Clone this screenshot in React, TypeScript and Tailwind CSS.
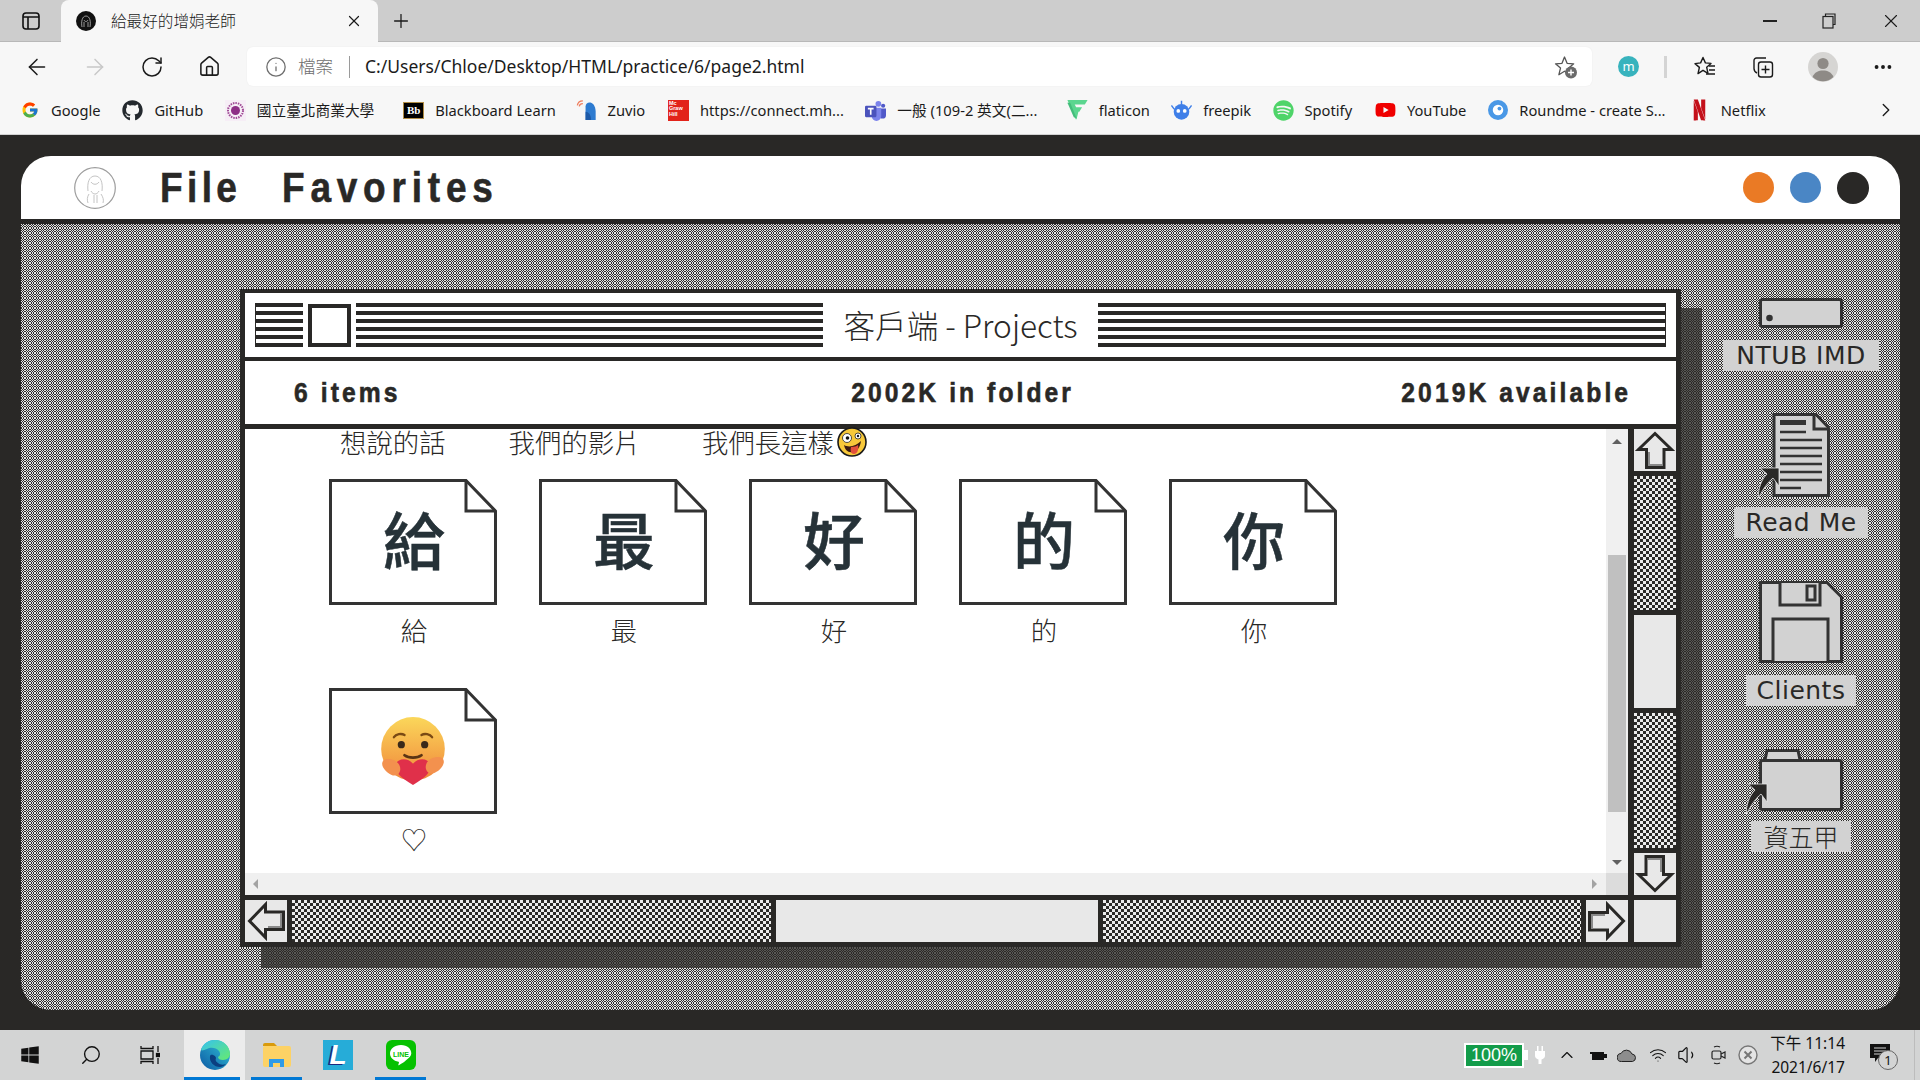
import { ArrowLeft, ArrowRight, ChevronRight, ChevronUp, Home, Info, MoreHorizontal, Plus, RotateCw, Search, Volume1, Wifi, X } from "lucide-react";
import type { ReactNode } from "react";
import { FaGithub, FaSpotify, FaWindows, FaYoutube } from "react-icons/fa";
import { FcGoogle } from "react-icons/fc";
import { SiNetflix } from "react-icons/si";

const checker =
  "bg-[conic-gradient(#2b2a28_25%,#ececec_0_50%,#2b2a28_0_75%,#ececec_0)] bg-[length:6px_6px]";
const headFont =
  "inline-block font-['Liberation_Sans',sans-serif] font-bold text-[#292826] scale-x-[.88] [-webkit-text-stroke:0.6px_#292826]";
const sysFont = "font-['Noto_Sans','Noto_Sans_CJK_TC',sans-serif]";
const cjkLight = "font-['Noto_Sans_CJK_TC','Noto_Sans',sans-serif] font-light";

const bookmarks: { icon: ReactNode; label: string; width: string }[] = [
  { icon: <FcGoogle className="size-[18px]" />, label: "Google", width: "w-[50px]" },
  { icon: <FaGithub className="size-[21px] text-[#24292e]" />, label: "GitHub", width: "w-[49px]" },
  { icon: <NtubIcon />, label: "國立臺北商業大學", width: "w-[125px]" },
  { icon: <BbIcon />, label: "Blackboard Learn", width: "w-[119px]" },
  { icon: <ZuvioIcon />, label: "Zuvio", width: "w-[39px]" },
  { icon: <McGrawIcon />, label: "https://connect.mh...", width: "w-[144px]" },
  { icon: <TeamsIcon />, label: "一般 (109-2 英文(二...", width: "w-[148px]" },
  { icon: <FlaticonIcon />, label: "flaticon", width: "w-[51px]" },
  { icon: <FreepikIcon />, label: "freepik", width: "w-[48px]" },
  { icon: <FaSpotify className="size-[21px] text-[#4fd469]" />, label: "Spotify", width: "w-[49px]" },
  { icon: <FaYoutube className="size-[22px] text-[#f00000]" />, label: "YouTube", width: "w-[59px]" },
  { icon: <RoundmeIcon />, label: "Roundme - create S...", width: "w-[148px]" },
  { icon: <SiNetflix className="size-[22px] text-[#c4101a]" />, label: "Netflix", width: "w-[44px]" },
];

const files = ["給", "最", "好", "的", "你"];

// wallpaper is a 1px checker blown up by 125%, so cells come out 1,1,1,2 px wide
const ditherCells = [
  [0, 1],
  [1, 1],
  [2, 1],
  [3, 2],
];

export default function App() {
  return (
    <div className={`flex h-[1080px] w-[1920px] flex-col overflow-hidden bg-[#292826] ${sysFont}`}>
      <BrowserChrome />
      <main className="flex min-h-0 flex-1 flex-col pl-[21px] pr-[20px] pt-[21px] pb-[20px]">
        <MenuBar />
        <section className="relative mt-[5px] flex flex-1 overflow-hidden rounded-b-[30px] pl-[219px] pt-[65px]">
          <Wallpaper />
          <div className="absolute top-[84px] left-[240px] h-[660px] w-[1441px] bg-[#292826]/75" />
          <FinderWindow />
          <DesktopIcons />
        </section>
      </main>
      <Taskbar />
    </div>
  );
}

function Wallpaper() {
  return (
    <svg aria-hidden className="absolute inset-0 h-full w-full" shapeRendering="crispEdges">
      <defs>
        <pattern id="dither" width="5" height="5" patternUnits="userSpaceOnUse">
          <rect width="5" height="5" fill="#e4e4e4" />
          {ditherCells.flatMap(([col, w], i) =>
            ditherCells.map(([row, h], j) =>
              (i + j) % 2 === 1 ? <rect key={`${i}-${j}`} x={col} y={row} width={w} height={h} fill="#2e2d2b" /> : null,
            ),
          )}
        </pattern>
      </defs>
      <rect width="100%" height="100%" fill="url(#dither)" />
    </svg>
  );
}

function BrowserChrome() {
  return (
    <header className="shrink-0 text-[#1b1b1b]">
      <div className="flex h-[42px] items-stretch border-b border-[#b8b8b8] bg-[#cdcdcd]">
        <div className="flex w-[61px] items-center justify-center">
          <svg viewBox="0 0 18 18" className="size-[18px]" fill="none" stroke="#111" strokeWidth="1.6">
            <rect x="1" y="1" width="16" height="16" rx="3" />
            <path d="M1 5h16M6 5v12" />
          </svg>
        </div>
        <div className="-mb-px flex w-[317px] items-center rounded-t-lg bg-[#f7f7f7] pl-[15px]">
          <TabFavicon />
          <span className={`ml-[15px] text-[15.6px] ${cjkLight}`}>給最好的增娟老師</span>
          <X className="ml-auto mr-[15px] size-[18px]" strokeWidth={1.6} />
        </div>
        <Plus className="ml-[12px] size-[22px] self-center" strokeWidth={1.4} />
        <div className="ml-auto flex items-center">
          <span className="h-[2px] w-[14px] bg-[#222]" />
          <svg viewBox="0 0 14 16" className="ml-[45px] h-[16px] w-[14px]" fill="none" stroke="#222" strokeWidth="1.2">
            <rect x="1" y="3.5" width="10" height="11.5" />
            <path d="M3.5 3.5V1H13v10.5h-2" />
          </svg>
          <X className="ml-[44px] mr-[18px] size-[22px]" strokeWidth={1.2} />
        </div>
      </div>
      <div className="flex h-[46px] items-center bg-[#f7f7f7] pt-[3px]">
        <div className="flex w-[247px] items-center">
          <ArrowLeft className="ml-[24px] size-[26px]" strokeWidth={1.4} />
          <ArrowRight className="ml-[32px] size-[26px] text-[#c8c8c8]" strokeWidth={1.4} />
          <RotateCw className="ml-[32px] size-[24px]" strokeWidth={1.5} />
          <Home className="ml-[34px] size-[23px]" strokeWidth={1.6} />
        </div>
        <div className="flex h-[39px] w-[1345px] items-center rounded-md bg-white pl-[18px] shadow-[0_0_2px_#0000000f]">
          <Info className="size-[22px] text-[#6e6e6e]" strokeWidth={1.4} />
          <span className={`ml-[11px] text-[17.5px] text-[#6e6e6e] ${cjkLight}`}>檔案</span>
          <span className="ml-[16px] h-[22px] w-px bg-[#9a9a9a]" />
          <span className="ml-[15px] text-[17.5px] leading-none text-[#1b1b1b]">C:/Users/Chloe/Desktop/HTML/practice/6/page2.html</span>
          <StarPlus />
        </div>
        <span className="ml-[26px] flex size-[21px] items-center justify-center rounded-full bg-[#38b3bd] text-[13px] leading-none text-white">m</span>
        <span className="ml-[25px] h-[22px] w-[3px] bg-[#d4d4d4]" />
        <FavoritesIcon />
        <CollectionsIcon />
        <Avatar />
        <MoreHorizontal className="ml-[34px] size-[22px]" strokeWidth={2.2} />
      </div>
      <div className="flex h-[47px] items-center gap-[21.4px] border-b border-[#d2d2d2] bg-[#f7f7f7] pb-[2px] pl-[19px]">
        {bookmarks.map((b) => (
          <div key={b.label} className="flex items-center gap-[11px]">
            <span className="flex w-[21px] items-center justify-center">{b.icon}</span>
            <span className={`${b.width} whitespace-nowrap text-[14.7px] leading-none text-[#1b1b1b]`}>{b.label}</span>
          </div>
        ))}
        <ChevronRight className="ml-auto mr-[23px] size-[22px]" strokeWidth={1.5} />
      </div>
    </header>
  );
}

function MenuBar() {
  return (
    <nav className="flex h-[63px] shrink-0 items-center rounded-t-[30px] bg-white pl-[53px] pr-[31px]">
      <GirlAvatar />
      <span className="ml-[44px] w-[122px]">
        <span className={`origin-left text-[42px] leading-none tracking-[5px] ${headFont}`}>File</span>
      </span>
      <span className={`origin-left text-[42px] leading-none tracking-[6.6px] ${headFont}`}>Favorites</span>
      <div className="ml-auto flex gap-[16px]">
        <span className="size-[31px] rounded-full bg-[#ea7a25]" />
        <span className="size-[31px] rounded-full bg-[#4a86c5]" />
        <span className="size-[32px] rounded-full bg-[#292826]" />
      </div>
    </nav>
  );
}

function FinderWindow() {
  return (
    <div className="relative flex h-[658px] w-[1441px] shrink-0 flex-col border-x-[5px] border-t-4 border-b-[5px] border-[#292826] bg-[#292826]">
      <div className="flex h-[64px] shrink-0 items-center bg-white px-[10px]">
        <Stripes className="w-[48px] border-l" />
        <span className="ml-[5px] h-[43px] w-[43px] border-4 border-[#292826]" />
        <Stripes className="ml-[5px] w-[467px]" />
        <span className={`w-[275px] text-center text-[31.6px] leading-none text-[#292826] ${cjkLight}`}>客戶端 - Projects</span>
        <Stripes className="w-[568px] border-r" />
      </div>
      <div className="mt-[4px] grid h-[63px] shrink-0 grid-cols-3 items-center bg-white pl-[49px] pr-[45px] pt-[1px]">
        <span>
          <span className={`origin-left text-[28px] leading-none tracking-[3.5px] ${headFont}`}>6 items</span>
        </span>
        <span className="text-center">
          <span className={`origin-center text-[28px] leading-none tracking-[3.5px] ${headFont}`}>2002K in folder</span>
        </span>
        <span className="text-right">
          <span className={`origin-right text-[28px] leading-none tracking-[3.5px] ${headFont}`}>2019K available</span>
        </span>
      </div>
      <div className="mt-[5px] grid flex-1 grid-cols-[1383px_42px] grid-rows-[466px_42px] gap-x-[6px] gap-y-[5px]">
        <ContentPane />
        <div className="flex flex-col gap-[5px]">
          <ArrowButton className="h-[42px]" />
          <div className={`h-[134px] ${checker}`} />
          <div className="h-[93px] bg-[#e8e8e8]" />
          <div className={`flex-1 ${checker}`} />
          <ArrowButton className="h-[42px]" rotate="rotate-180" />
        </div>
        <div className="flex gap-[5px]">
          <ArrowButton className="w-[42px]" rotate="-rotate-90" />
          <div className={`w-[479px] ${checker}`} />
          <div className="w-[322px] bg-[#e8e8e8]" />
          <div className={`flex-1 ${checker}`} />
          <ArrowButton className="w-[42px]" rotate="rotate-90" />
        </div>
        <div className="bg-[#e8e8e8]" />
      </div>
    </div>
  );
}

function ContentPane() {
  return (
    <div className="flex flex-col bg-white">
      <div className="flex min-h-0 flex-1">
        <div className={`flex-1 text-[#292826] ${cjkLight}`}>
          <div className="flex h-[50px] items-start pl-[95px] text-[26.4px] leading-[26px]">
            <span>想說的話</span>
            <span className="ml-[63px]">我們的影片</span>
            <span className="ml-[61.5px] flex items-center">
              我們長這樣
              <CrazyEmoji />
            </span>
          </div>
          <div className="grid grid-cols-[repeat(5,168px)] gap-x-[42px] pl-[84px]">
            {files.map((f) => (
              <FileItem key={f} label={f}>
                <span className="pb-[3px] pl-[2px] font-['Noto_Sans_CJK_TC',sans-serif] text-[62px] leading-none font-medium text-[#263238] [-webkit-text-stroke:0.5px_#263238]">{f}</span>
              </FileItem>
            ))}
            <FileItem label="♡">
              <CareEmoji />
            </FileItem>
          </div>
        </div>
        <div className="flex w-[22px] flex-col items-center bg-[#f0f0f0] pt-[10px]">
          <span className="h-0 w-0 border-x-[5px] border-b-[5px] border-x-transparent border-b-[#606060]" />
          <span className="mt-[111px] h-[257px] w-[18px] bg-[#c0c0c0]" />
          <span className="mt-[48px] h-0 w-0 border-x-[5px] border-t-[5px] border-x-transparent border-t-[#606060]" />
        </div>
      </div>
      <div className="flex h-[22px] shrink-0 items-center bg-[#f0f0f0] pl-[8px]">
        <span className="h-0 w-0 border-y-[5px] border-r-[5px] border-y-transparent border-r-[#a3a3a3]" />
        <span className="ml-auto mr-[9px] h-0 w-0 border-y-[5px] border-l-[5px] border-y-transparent border-l-[#a3a3a3]" />
        <span className="h-[22px] w-[22px] bg-[#dcdcdc]" />
      </div>
    </div>
  );
}

function FileItem({ label, children }: { label: string; children: ReactNode }) {
  return (
    <div className="flex h-[209px] flex-col items-center">
      <div className="relative flex h-[126px] w-[168px] items-center justify-center pb-[6px]">
        <svg viewBox="0 0 168 126" className="absolute inset-0 h-[126px] w-[168px]" fill="#fff" stroke="#333" strokeWidth="3">
          <path d="M1.5 1.5H137L166.5 32V124.5H1.5Z" />
          <path d="M137 1.5V32H166.5" fill="none" />
        </svg>
        <span className="relative flex items-center justify-center">{children}</span>
      </div>
      <span className="mt-[10px] pl-[2px] text-[26.4px] leading-[30px]">{label}</span>
    </div>
  );
}

function Stripes({ className }: { className: string }) {
  return (
    <span
      className={`h-[44px] border-[#292826] bg-[repeating-linear-gradient(#292826_0_4px,#fff_4px_8px)] ${className}`}
    />
  );
}

function ArrowButton({ className, rotate = "" }: { className: string; rotate?: string }) {
  return (
    <div className={`flex items-center justify-center bg-[#e8e8e8] ${className}`}>
      <svg viewBox="0 0 42 42" className={`size-[42px] shrink-0 ${rotate}`} fill="none" strokeLinejoin="miter">
        <path d="M21 4.5L37.5 20.5H30V38.5H12.5V20.5H4.5Z" stroke="#292826" strokeWidth="3" />
        <path d="M15 23V36H28" stroke="#8a8a8a" strokeWidth="2" />
      </svg>
    </div>
  );
}

function DesktopIcons() {
  return (
    <div className="relative ml-[40px] flex w-[160px] flex-col items-center pt-[9px]">
      <svg viewBox="0 0 84 30" className="h-[30px] w-[84px]" fill="#d2d2d2" stroke="#333" strokeWidth="3">
        <rect x="1.5" y="1.5" width="81" height="27" rx="2" />
        <circle cx="10.5" cy="20" r="1.8" fill="#292826" />
      </svg>
      <DeskLabel className="mt-[12px] px-[13px]" text="NTUB IMD" />

      <div className="relative mt-[42px] h-[84px] w-[84px]">
        <svg viewBox="0 0 84 84" className="h-[84px] w-[84px]" fill="#d2d2d2" stroke="#333" strokeWidth="3">
          <path d="M15 1.5H57L69.5 15V82.5H15Z" />
          <path d="M55 2V16H69" />
          <path d="M21 9.5H47" strokeWidth="5" />
          <path d="M21 19H47M21 27H63M21 35H63M21 43H63M21 51H63M21 59H63M21 67H63M21 75H42" strokeWidth="2.5" />
        </svg>
        <ShortcutArrow className="absolute top-[54px] left-[-2px]" />
      </div>
      <DeskLabel className="mt-[10px] px-[11px]" text="Read Me" />

      <svg viewBox="0 0 84 82" className="mt-[43px] h-[82px] w-[84px]" fill="#d2d2d2" stroke="#333" strokeWidth="3">
        <path d="M1.5 1.5H68L82.5 16V80.5H1.5Z" />
        <path d="M21 2V24H61V2" />
        <path d="M48 5H56V19H48Z" />
        <path d="M14 80V38H69V80" />
      </svg>
      <DeskLabel className="mt-[12px] px-[11px]" text="Clients" />

      <div className="relative mt-[43px] h-[62px] w-[84px]">
        <svg viewBox="0 0 84 62" className="h-[62px] w-[84px]" fill="#d2d2d2" stroke="#333" strokeWidth="3">
          <path d="M6 11L8 1.5H39L41 11" />
          <rect x="1.5" y="11.5" width="81" height="49" rx="2" />
        </svg>
        <ShortcutArrow className="absolute top-[34px] left-[-14px]" />
      </div>
      <DeskLabel className={`mt-[10px] px-[12px] tracking-normal ${cjkLight}`} text="資五甲" />
    </div>
  );
}

function DeskLabel({ text, className }: { text: string; className: string }) {
  return (
    <span
      className={`h-[31px] whitespace-nowrap bg-[#d2d2d2] font-['DejaVu_Sans','Noto_Sans_CJK_TC',sans-serif] text-[25px] leading-[31px] tracking-[0.5px] text-[#292826] ${className}`}
    >
      {text}
    </span>
  );
}

function ShortcutArrow({ className }: { className: string }) {
  return (
    <svg viewBox="0 0 24 32" className={`h-[32px] w-[24px] ${className}`} fill="#292826" stroke="#e6e6e6" strokeWidth="0.8">
      <path d="M3 1H22V19L16 11C11 15 6 22 1.5 31C1 22 4 13 10 7Z" />
    </svg>
  );
}

function TabFavicon() {
  return (
    <svg viewBox="0 0 20 20" className="size-[20px] shrink-0">
      <circle cx="10" cy="10" r="10" fill="#111" />
      <path d="M6 16c-1-5 0-11 4-11s5 6 4 11M8 9c1 2 3 2 4 0M8 16v-5M12 16v-5" fill="none" stroke="#bbb" strokeWidth="0.8" />
    </svg>
  );
}

function GirlAvatar() {
  return (
    <svg viewBox="0 0 42 42" className="size-[42px] shrink-0" fill="none">
      <circle cx="21" cy="21" r="20.3" stroke="#9d9d9d" strokeWidth="1.2" />
      <path d="M14 24c-1-8 1-15 7-15s8 7 7 15M15 27c-2 3-2 6-1 9M27 27c2 3 3 6 2 9M17 15c2 3 6 3 8 0M17 24c2 4 6 4 8 0M20 28v8M23 28v8" stroke="#c4c4c4" strokeWidth="1" />
    </svg>
  );
}

function StarPlus() {
  return (
    <svg viewBox="0 0 24 24" className="ml-auto mr-[14px] size-[24px]">
      <path d="M10.5 2l2.6 6.3 6.6.5-5 4.3 1.4 6.6-5.6-3.5-5.6 3.5 1.6-6.6-5-4.3 6.5-.5Z" fill="none" stroke="#555" strokeWidth="1.3" strokeLinejoin="round" />
      <circle cx="17" cy="17.5" r="6" fill="#6a6a6a" />
      <path d="M14 17.5h6M17 14.5v6" stroke="#fff" strokeWidth="1.4" />
    </svg>
  );
}

function FavoritesIcon() {
  return (
    <svg viewBox="0 0 24 24" className="ml-[26px] size-[24px]" fill="none" stroke="#1b1b1b" strokeWidth="1.4" strokeLinejoin="round">
      <path d="M10 2.5l2.4 5.4 5.6.5-4.3 3.9 1.3 6-5-3-5 3.3 1.4-6.2L2 8.6l5.6-.7Z" />
      <path d="M16 11h6M16 15h6M13 19h9" />
    </svg>
  );
}

function CollectionsIcon() {
  return (
    <svg viewBox="0 0 24 24" className="ml-[34px] size-[24px]" fill="none" stroke="#1b1b1b" strokeWidth="1.4" strokeLinejoin="round">
      <path d="M15 3H5.5A2.5 2.5 0 0 0 3 5.5v8c0 2 1 3.5 3 4.5" />
      <rect x="7.5" y="7" width="14" height="15" rx="2.5" />
      <path d="M14.5 10.5v8M10.5 14.5h8" />
    </svg>
  );
}

function Avatar() {
  return (
    <svg viewBox="0 0 30 30" className="ml-[33px] size-[30px]">
      <circle cx="15" cy="15" r="15" fill="#d6d5d3" />
      <circle cx="15" cy="11.5" r="5.6" fill="#8e8a86" />
      <path d="M4.5 25c2-5 6-6.5 10.5-6.5s8.5 1.5 10.5 6.5a15 15 0 0 1-21 0Z" fill="#8e8a86" />
    </svg>
  );
}

function NtubIcon() {
  return (
    <svg viewBox="0 0 21 21" className="size-[21px]">
      <rect width="21" height="21" fill="#f6eef6" />
      <circle cx="10.5" cy="10.5" r="7.5" fill="none" stroke="#a04a96" strokeWidth="2" strokeDasharray="1.5 1" />
      <circle cx="10.5" cy="10.5" r="4.5" fill="#8e2f86" />
    </svg>
  );
}

function BbIcon() {
  return (
    <span className="flex h-[17px] w-[21px] items-center justify-center border border-[#b08d45] bg-black font-['Liberation_Serif',serif] text-[11px] leading-none font-bold text-white">
      Bb
    </span>
  );
}

function ZuvioIcon() {
  return (
    <svg viewBox="0 0 22 24" className="h-[22px] w-[21px]">
      <path d="M10 8c0-3 3-5 6-4 3 1 5 5 5 10v9H10Z" fill="#2e7bd0" />
      <path d="M10 14c3 0 6 3 6 9h-6Z" fill="#1d5aa8" />
      <path d="M1 7a6 6 0 0 1 6-5M3 8a4 4 0 0 1 4-3" fill="none" stroke="#ee7b5a" strokeWidth="1.4" />
    </svg>
  );
}

function McGrawIcon() {
  return (
    <span className="flex h-[21px] w-[21px] flex-col bg-[#e2231a] pl-px pt-px font-['Liberation_Sans',sans-serif] text-[5.5px] leading-[5.5px] font-bold text-white">
      <span>Mc</span>
      <span>Graw</span>
      <span>Hill</span>
    </span>
  );
}

function TeamsIcon() {
  return (
    <svg viewBox="0 0 22 22" className="size-[21px]">
      <circle cx="14" cy="4" r="3" fill="#7b83eb" />
      <circle cx="19" cy="6" r="2.2" fill="#5059c9" />
      <path d="M15 9h7v7a3.5 3.5 0 0 1-7 0Z" fill="#5059c9" />
      <path d="M6 8h11v9a5 5 0 0 1-10 0Z" fill="#7b83eb" />
      <rect y="6" width="12" height="12" rx="1.2" fill="#4b53bc" />
      <path d="M3 9h6M6 9v6.5" stroke="#fff" strokeWidth="1.7" />
    </svg>
  );
}

function FlaticonIcon() {
  return (
    <svg viewBox="0 0 22 24" className="h-[22px] w-[21px]" fill="#5bd68f">
      <path d="M0 1h22l-3 5H8l1.5 3H16l-3 5H12l-2 8h-1Z" />
      <path d="M3 4l7 17-3-1L0 4Z" fill="#43bd7b" />
    </svg>
  );
}

function FreepikIcon() {
  return (
    <svg viewBox="0 0 22 24" className="h-[22px] w-[21px]">
      <circle cx="11" cy="14" r="8.5" fill="#3f7fe8" />
      <circle cx="7.5" cy="13" r="2" fill="#fff" />
      <circle cx="14.5" cy="13" r="2" fill="#fff" />
      <path d="M11 6V2M3 11L0 7M19 11l3-4" stroke="#3f7fe8" strokeWidth="1.6" />
    </svg>
  );
}

function RoundmeIcon() {
  return (
    <svg viewBox="0 0 21 21" className="size-[20px]">
      <circle cx="10.5" cy="10.5" r="10.5" fill="#4a98e6" />
      <circle cx="10.5" cy="10.5" r="5.5" fill="#fff" />
      <circle cx="12" cy="9" r="2" fill="#4a98e6" />
    </svg>
  );
}

function CrazyEmoji() {
  return (
    <svg viewBox="0 0 30 30" className="-my-[2px] ml-[3px] size-[30px] shrink-0">
      <circle cx="15" cy="15" r="14" fill="#f7c83a" stroke="#1a1a1a" strokeWidth="1.6" />
      <circle cx="10" cy="11" r="4.5" fill="#fff" stroke="#222" strokeWidth="0.8" />
      <circle cx="10.5" cy="11" r="1.8" fill="#111" />
      <circle cx="21" cy="9" r="3" fill="#fff" stroke="#222" strokeWidth="0.8" />
      <circle cx="21" cy="9" r="1.2" fill="#111" />
      <path d="M7 18c5 3 12 1 17-4-1 7-4 10-8 11-5 1-8-2-9-7Z" fill="#3a1a12" />
      <path d="M14 20c3 0 6-1 7-2 1 5-1 9-4 9s-4-3-3-7Z" fill="#e2503c" />
    </svg>
  );
}

function CareEmoji() {
  return (
    <svg viewBox="0 0 66 66" className="mt-[6px] size-[70px]">
      <defs>
        <linearGradient id="care" x1="0" y1="0" x2="0" y2="1">
          <stop offset="0" stopColor="#fbd75a" />
          <stop offset="1" stopColor="#f0863a" />
        </linearGradient>
      </defs>
      <circle cx="33" cy="31" r="30" fill="url(#care)" />
      <path d="M15 20c2-3 7-4 10-2M41 18c3-2 8-1 10 2" fill="none" stroke="#7a4a14" strokeWidth="2.2" strokeLinecap="round" />
      <circle cx="22" cy="27" r="3.4" fill="#3a2a1a" />
      <circle cx="44" cy="27" r="3.4" fill="#3a2a1a" />
      <path d="M25 37c4 3 12 3 16 0" fill="none" stroke="#5a3414" strokeWidth="2.6" strokeLinecap="round" />
      <path d="M33 65C19 57 15 51 17 45c2-5 11-6 16 0 5-6 14-5 16 0 2 6-2 12-16 20Z" fill="#e0304a" />
      <path d="M5 42c4-3 12-1 15 4 3 6-1 11-6 10S1 47 5 42ZM61 40c-4-3-12-1-15 4-3 6 1 11 6 10s13-9 9-14Z" fill="#f3914e" />
    </svg>
  );
}

function Taskbar() {
  return (
    <footer className="relative flex h-[50px] shrink-0 items-center bg-[#d3d4d4] text-[#111]">
      <FaWindows className="ml-[20px] size-[20px]" />
      <Search className="ml-[40px] size-[22px] -scale-x-100" strokeWidth={1.5} />
      <svg viewBox="0 0 20 20" className="ml-[38px] size-[20px]" fill="none" stroke="#111" strokeWidth="1.3">
        <path d="M1 1v2.5h12V1M1 19v-2.5h12V19M1 6h12v8H1ZM18 1v6M18 13v6" />
        <rect x="16.5" y="8.5" width="3" height="3" fill="#111" />
      </svg>
      <TaskTile className="ml-[24px] w-[61px] bg-[#ececec]" bar="w-[56px]">
        <EdgeIcon />
      </TaskTile>
      <TaskTile className="ml-[6px] w-[51px]" bar="w-[51px]">
        <ExplorerIcon />
      </TaskTile>
      <span className="ml-[21px] flex size-[30px] items-center justify-center bg-[#26acd8] font-['Liberation_Sans',sans-serif] text-[28px] leading-none font-bold italic text-white [text-shadow:-2px_1px_0_#1a2a80]">
        L
      </span>
      <TaskTile className="ml-[22px] w-[51px]" bar="w-[51px]">
        <LineIcon />
      </TaskTile>
      <div className="ml-auto flex items-center pr-[12px]">
        <span className="border-[2px] border-white bg-[#139c4a] px-[5px] font-['Liberation_Sans',sans-serif] text-[18px] leading-[21px] text-white">100%</span>
        <span className="h-[10px] w-[4px] bg-white" />
        <svg viewBox="0 0 10 18" className="ml-[7px] h-[18px] w-[10px]" fill="#fff">
          <path d="M2 0h1.5v5h3V0H8v5h2v5c0 2-2 3-3.5 3.5V18h-3v-4.5C2 13 0 12 0 10V5h2Z" />
        </svg>
        <ChevronUp className="ml-[12px] size-[20px]" strokeWidth={1.4} />
        <svg viewBox="0 0 20 12" className="ml-[10px] h-[12px] w-[20px]">
          <path d="M0 3h3v2h2v6h12V9h3V5h-3V3Z" fill="#111" />
        </svg>
        <svg viewBox="0 0 20 13" className="ml-[10px] h-[13px] w-[20px]" fill="#8d8d8d" stroke="#222" strokeWidth="1">
          <path d="M4.5 12.5a4 4 0 0 1-.5-8A6 6 0 0 1 15 5a3.8 3.8 0 0 1 .5 7.5Z" />
        </svg>
        <Wifi className="ml-[12px] size-[18px]" strokeWidth={1.4} />
        <Volume1 className="ml-[10px] size-[22px]" strokeWidth={1.3} />
        <svg viewBox="0 0 16 20" className="ml-[12px] h-[20px] w-[16px]" fill="none" stroke="#222" strokeWidth="1.2">
          <rect x="1" y="6" width="9" height="8" rx="1.5" />
          <path d="M10 9l4-2v6l-4-2M3 2c2-1 4-1 6 0M3 18c2 1 4 1 6 0" />
        </svg>
        <svg viewBox="0 0 20 20" className="ml-[11px] size-[20px]" fill="#e4e4e4" stroke="#777" strokeWidth="1.4">
          <circle cx="10" cy="10" r="9" />
          <path d="M6.5 6.5l7 7M13.5 6.5l-7 7" strokeWidth="2" />
        </svg>
        <div className={`ml-[14px] flex w-[73px] flex-col items-end text-[15.5px] leading-[24px] ${sysFont}`}>
          <span className="whitespace-nowrap">下午 11:14</span>
          <span className="whitespace-nowrap">2021/6/17</span>
        </div>
        <div className="relative ml-[25px] mr-[16px] h-[22px] w-[22px]">
          <svg viewBox="0 0 20 18" className="h-[18px] w-[20px]">
            <path d="M0 0h20v14H8l-3 4v-4H0Z" fill="#111" />
            <path d="M4 4h12M4 7h12M4 10h8" stroke="#d3d4d4" strokeWidth="1" />
          </svg>
          <span className="absolute top-[6px] left-[8px] flex size-[20px] items-center justify-center rounded-full border border-[#666] bg-[#d3d4d4] text-[13px] leading-none">1</span>
        </div>
      </div>
      <span className="absolute top-0 right-[5px] h-full w-px bg-[#bcbcbc]" />
    </footer>
  );
}

function TaskTile({ className, bar, children }: { className: string; bar: string; children: ReactNode }) {
  return (
    <div className={`relative flex h-[50px] items-center justify-center ${className}`}>
      {children}
      <span className={`absolute bottom-0 left-0 h-[3px] bg-[#0078d4] ${bar}`} />
    </div>
  );
}

function EdgeIcon() {
  return (
    <svg viewBox="0 0 30 30" className="size-[30px]">
      <defs>
        <linearGradient id="edgeA" x1="0" y1="1" x2="1" y2="0">
          <stop offset="0" stopColor="#0c59a4" />
          <stop offset="1" stopColor="#33c6d8" />
        </linearGradient>
        <linearGradient id="edgeB" x1="0" y1="0" x2="1" y2="1">
          <stop offset="0" stopColor="#35c1f1" />
          <stop offset="1" stopColor="#66eb6e" />
        </linearGradient>
      </defs>
      <circle cx="15" cy="15" r="15" fill="url(#edgeA)" />
      <path d="M1 10C3 3 9 0 15 0c8 0 15 6 15 14 0 3-3 6-7 6-3 0-5-1-5-3 2-1 3-3 1-6-3-4-9-4-12-2-3 1-5 2-6 1Z" fill="url(#edgeB)" />
      <path d="M10 16c-1 6 4 11 10 11 2 0 4-1 6-3-3 1-6 1-8-1-2-1-3-3-2-5 0-2-5-5-6-2Z" fill="#0b3f80" />
    </svg>
  );
}

function ExplorerIcon() {
  return (
    <svg viewBox="0 0 28 24" className="h-[24px] w-[28px]">
      <path d="M0 2a2 2 0 0 1 2-2h9l3 3H0Z" fill="#d99a0b" />
      <rect y="3" width="28" height="21" rx="2" fill="#fdd265" />
      <path d="M6 24v-8h15v8h-4v-4h-7v4Z" fill="#2f9be8" />
    </svg>
  );
}

function LineIcon() {
  return (
    <svg viewBox="0 0 30 30" className="size-[30px]">
      <rect width="30" height="30" rx="6" fill="#06c100" />
      <path d="M15 5C8.5 5 4 9 4 13.5c0 4 3.5 7.5 8.5 8.2.8.2.5 1-.2 3-.1.5.3.8 1 .4 2.5-1.5 5-3 7-5 2.5-2 5-4 5-6.6C25.3 9 21.5 5 15 5Z" fill="#fff" />
      <text x="15" y="16.5" textAnchor="middle" fontSize="7" fontWeight="700" fill="#06c100" fontFamily="Liberation Sans">LINE</text>
    </svg>
  );
}
